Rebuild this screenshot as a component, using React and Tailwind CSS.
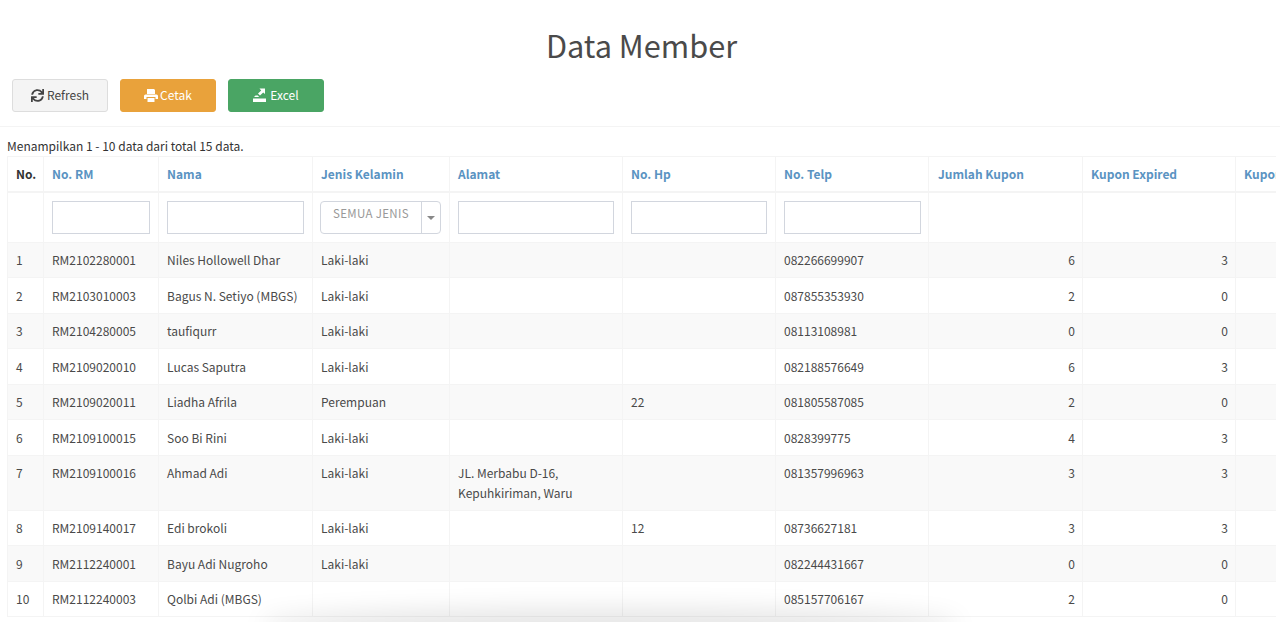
import React from "react";
import { FaSync } from "react-icons/fa";

const heads = ["No. RM", "Nama", "Jenis Kelamin", "Alamat", "No. Hp", "No. Telp", "Jumlah Kupon", "Kupon Expired", "Kupon"];
const widths = [36, 115, 154, 137, 173, 153, 153, 154, 153, 150];
const rows = [
  ["1", "RM2102280001", "Niles Hollowell Dhar", "Laki-laki", "", "", "082266699907", "6", "3"],
  ["2", "RM2103010003", "Bagus N. Setiyo (MBGS)", "Laki-laki", "", "", "087855353930", "2", "0"],
  ["3", "RM2104280005", "taufiqurr", "Laki-laki", "", "", "08113108981", "0", "0"],
  ["4", "RM2109020010", "Lucas Saputra", "Laki-laki", "", "", "082188576649", "6", "3"],
  ["5", "RM2109020011", "Liadha Afrila", "Perempuan", "", "22", "081805587085", "2", "0"],
  ["6", "RM2109100015", "Soo Bi Rini", "Laki-laki", "", "", "0828399775", "4", "3"],
  ["7", "RM2109100016", "Ahmad Adi", "Laki-laki", "JL. Merbabu D-16, Kepuhkiriman, Waru", "", "081357996963", "3", "3"],
  ["8", "RM2109140017", "Edi brokoli", "Laki-laki", "", "12", "08736627181", "3", "3"],
  ["9", "RM2112240001", "Bayu Adi Nugroho", "Laki-laki", "", "", "082244431667", "0", "0"],
  ["10", "RM2112240003", "Qolbi Adi (MBGS)", "", "", "", "085157706167", "2", "0"],
];
const font = { fontFamily: '"Noto Sans CJK JP", "Open Sans", sans-serif' };
const td = "border border-[#f4f4f4] py-[7.5px] align-top text-[12px] leading-[19.5px] text-[#4a4a4a]";
const input = "block w-full h-[33px] border border-[#d2d6de] bg-white";

export default function App() {
  return (
    <div className="relative h-[622px] w-[1280px] overflow-hidden bg-white" style={font}>
      <h1 className="pt-[25px] text-center text-[30.7px] leading-[40px] font-normal text-[#4a4a4a] pl-[3px]">Data Member</h1>
      <div className="flex gap-3 px-3 pt-[14px]">
        <button className="flex h-[33px] w-24 items-center justify-center gap-[3px] rounded-[3px] border border-[#ddd] bg-[#f4f4f4] pb-[1px] text-[12px] text-[#444]">
          <FaSync className="text-[13px]" />Refresh
        </button>
        <button className="flex h-[33px] w-24 items-center justify-center gap-[2px] rounded-[3px] border border-[#e9a23b] bg-[#e9a23b] pb-[1px] text-[12px] text-white">
          <svg width="14" height="13" viewBox="0 0 14 13" fill="currentColor">
            <path d="M3 0H10L11 1V5H3Z" />
            <path d="M1.5 5.5H12.5Q14 5.5 14 7V10H11.5V8H2.5V10H0V7Q0 5.5 1.5 5.5Z" />
            <path d="M3.5 9H10.5V13H3.5Z" />
          </svg>
          Cetak
        </button>
        <button className="flex h-[33px] w-24 items-center justify-center gap-[4px] rounded-[3px] border border-[#4aa564] bg-[#4aa564] pb-[1px] text-[12px] text-white">
          <svg width="13" height="15" viewBox="0 0 13 15" fill="currentColor">
            <path d="M6.5 0.5H12V6L10.2 4.4 7 7.6 5 5.6 8.2 2.4Z" />
            <path d="M2.5 7.5H4.8L6.2 9H1Z" />
            <path d="M0 10.5H13V14H0Z" />
          </svg>
          Excel
        </button>
      </div>
      <div className="mt-[14px] border-t border-[#f4f4f4] pl-[7px] pt-[10px]">
        <p className="h-[19px] text-[12px] leading-[17px] text-[#333]">Menampilkan 1 - 10 data dari total 15 data.</p>
        <div className="w-[1269px] overflow-hidden">
          <table className="w-[1382px] table-fixed border-collapse">
            <colgroup>
              {widths.map((w, i) => <col key={i} style={{ width: w }} />)}
            </colgroup>
            <thead>
              <tr className="h-[35.5px]">
                <th className="border border-b-2 border-[#f4f4f4] px-2 text-left text-[12px] font-bold text-[#333]">No.</th>
                {heads.map((h) => (
                  <th key={h} className={`border border-b-2 border-[#f4f4f4] pr-2 text-left text-[12px] font-bold text-[#5a93c2] whitespace-nowrap ${h === "Jumlah Kupon" ? "pl-[9px]" : "pl-2"}`}>{h}</th>
                ))}
                <th className="border border-b-2 border-[#f4f4f4]"></th>
              </tr>
              <tr className="h-[50px]">
                <td className="border border-[#f4f4f4]"></td>
                <td className="border border-[#f4f4f4] px-2"><div className={input}></div></td>
                <td className="border border-[#f4f4f4] px-2"><div className={input}></div></td>
                <td className="border border-[#f4f4f4] px-2">
                  <div className="-ml-px flex h-[33px] rounded-[4px] border border-[#d2d6de] text-[11.5px] text-[#999]">
                    <span className="flex-1 pt-[1px] pl-3 leading-[20px] tracking-[0.35px]">SEMUA JENIS</span>
                    <span className="flex w-[19px] items-center justify-center border-l border-[#d2d6de]">
                      <span className="mt-[1px] border-x-[4px] border-t-[4px] border-x-transparent border-t-[#888]"></span>
                    </span>
                  </div>
                </td>
                <td className="border border-[#f4f4f4] px-2"><div className={input}></div></td>
                <td className="border border-[#f4f4f4] px-2"><div className={input}></div></td>
                <td className="border border-[#f4f4f4] pl-2 pr-[7px]"><div className={input}></div></td>
                <td className="border border-[#f4f4f4]"></td>
                <td className="border border-[#f4f4f4]"></td>
                <td className="border border-[#f4f4f4]"></td>
                <td className="border border-[#f4f4f4]"></td>
              </tr>
            </thead>
            <tbody>
              {rows.map((r, i) => (
                <tr key={r[0]} className={i % 2 === 0 ? "bg-[#f9f9f9]" : "bg-white"}>
                  {r.map((c, j) => (
                    <td key={j} className={`${td} ${j === 7 || j === 8 ? "pl-2 pr-[7px] text-right" : "px-2 text-left"}`}>{c || "\u00a0"}</td>
                  ))}
                  <td className={td}></td>
                </tr>
              ))}
            </tbody>
          </table>
        </div>
      </div>
      <div className="absolute -bottom-[12px] left-[270px] h-[12px] w-[680px] rounded-[50%] shadow-[0_-4px_24px_10px_rgba(0,0,0,0.10)]"></div>
    </div>
  );
}
